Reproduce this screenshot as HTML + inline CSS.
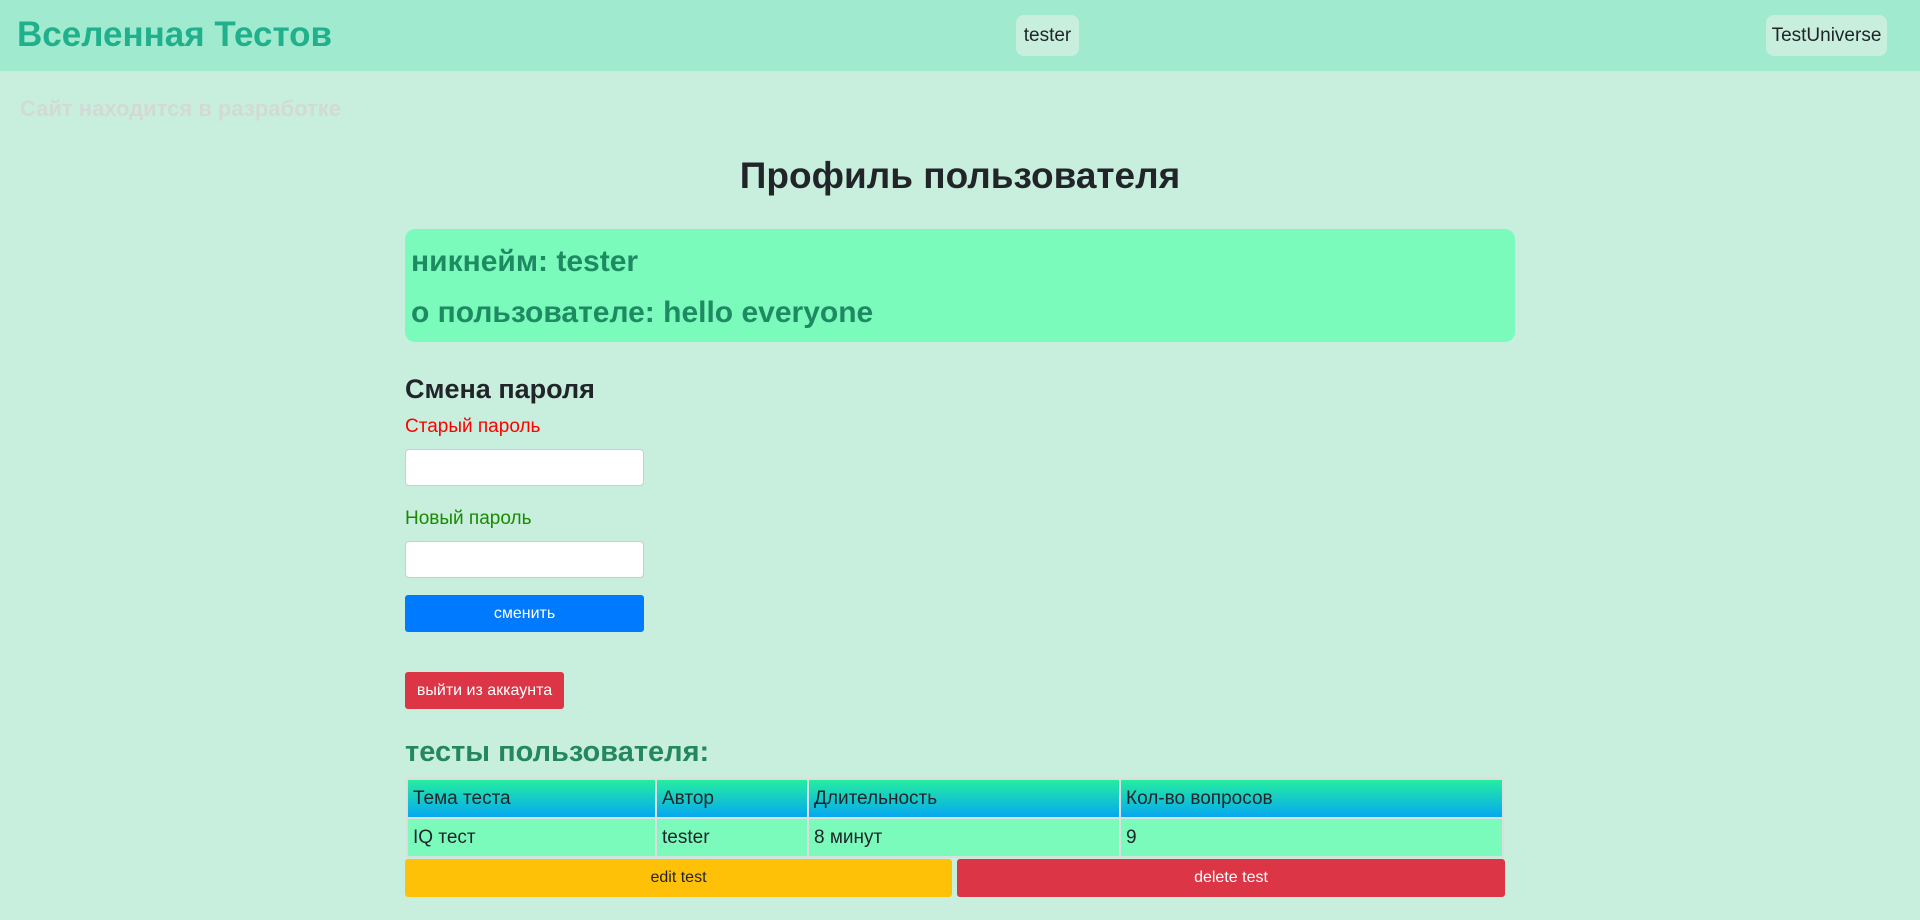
<!DOCTYPE html>
<html><head><meta charset="utf-8"><style>
*{box-sizing:border-box;margin:0;padding:0}
body{width:1920px;height:920px;overflow:hidden;background:#c8efdd;font-family:"Liberation Sans","Noto Sans CJK SC",sans-serif;color:#212529;position:relative}
.nav{position:absolute;left:0;top:0;width:1920px;height:71px;background:#a0ebcf}
.abs{position:absolute;white-space:nowrap}
.brand{left:17px;top:15px;font-size:35px;font-weight:bold;color:#20b08c}
.pill{background:#c8efdd;border-radius:8px;font-size:19px;display:flex;align-items:center;justify-content:center}
.box{left:405px;top:229px;width:1110px;height:113px;background:#7afbbc;border-radius:10px}
.btn{border-radius:3px;display:flex;align-items:center;justify-content:center;font-size:16px;color:#fff}
.inp{background:#fff;border:1px solid #ccc;border-radius:4px}
table{position:absolute;left:406px;top:778px;width:1098px;border-collapse:collapse;font-size:19px;background:#ddd}
td{border:2px solid #ddd;padding:0 5px;height:39px}
th{border:2px solid #ddd;padding:0 5px;height:39px;font-weight:normal;text-align:left;background:linear-gradient(#25eda0,#05a8f0)}
td{background:#7afbbc}
</style></head><body>
<div class="nav"></div>
<div class="abs brand">Вселенная Тестов</div>
<div class="abs pill" style="left:1016px;top:15px;width:63px;height:41px">tester</div>
<div class="abs pill" style="left:1766px;top:15px;width:121px;height:41px">TestUniverse</div>
<div class="abs" style="left:20px;top:96px;font-size:22px;font-weight:bold;color:#d3d9d6">Сайт находится в разработке</div>
<div class="abs" style="left:0;width:1920px;text-align:center;top:155px;font-size:37px;font-weight:bold">Профиль пользователя</div>
<div class="abs box"></div>
<div class="abs" style="left:411px;top:245px;font-size:30px;font-weight:bold;color:#1e8a62">никнейм: tester</div>
<div class="abs" style="left:411px;top:296px;font-size:30px;font-weight:bold;color:#1e8a62">о пользователе: hello everyone</div>
<div class="abs" style="left:405px;top:374px;font-size:27px;font-weight:bold">Смена пароля</div>
<div class="abs" style="left:405px;top:416px;font-size:19px;color:#f00">Старый пароль</div>
<div class="abs inp" style="left:405px;top:449px;width:239px;height:37px"></div>
<div class="abs" style="left:405px;top:508px;font-size:19px;color:#1a8a00">Новый пароль</div>
<div class="abs inp" style="left:405px;top:541px;width:239px;height:37px"></div>
<div class="abs btn" style="left:405px;top:595px;width:239px;height:37px;background:#007bff">сменить</div>
<div class="abs btn" style="left:405px;top:672px;width:159px;height:37px;background:#dc3545">выйти из аккаунта</div>
<div class="abs" style="left:405px;top:736px;font-size:29px;font-weight:bold;color:#24875e">тесты пользователя:</div>
<table>
<tr><th style="width:249px">Тема теста</th><th style="width:152px">Автор</th><th style="width:312px">Длительность</th><th>Кол-во вопросов</th></tr>
<tr><td>IQ тест</td><td>tester</td><td>8 минут</td><td>9</td></tr>
</table>
<div class="abs btn" style="left:405px;top:859px;width:547px;height:38px;background:#ffc107;color:#212529">edit test</div>
<div class="abs btn" style="left:957px;top:859px;width:548px;height:38px;background:#dc3545">delete test</div>
</body></html>
